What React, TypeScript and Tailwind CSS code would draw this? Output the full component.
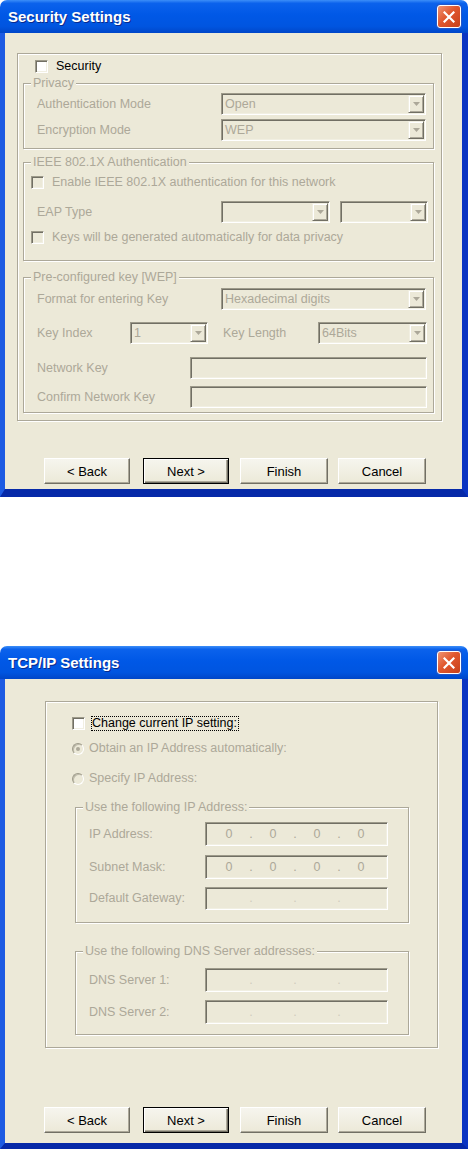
import React, { Fragment } from "react";

const SUNKEN =
  "border border-t-[#9D9A8A] border-l-[#9D9A8A] border-b-white border-r-white shadow-[inset_1px_1px_0_#716F64,inset_-1px_-1px_0_#F1EFE2]";
const GRAY = "text-[#ACA899]";

function CloseBtn() {
  return (
    <div className="w-[24px] h-[23px] rounded-[3px] border border-white bg-[linear-gradient(135deg,#EE9474_0%,#E0572E_45%,#C8401A_100%)] flex items-center justify-center shadow-[0_0_0_1px_#2457C8]">
      <svg width="12" height="12" viewBox="0 0 12 12">
        <path d="M1.5 1.5 L10.5 10.5 M10.5 1.5 L1.5 10.5" stroke="#fff" strokeWidth="2.2" strokeLinecap="square" />
      </svg>
    </div>
  );
}

function TitleBar({ title }: { title: string }) {
  return (
    <div className="h-[33px] flex items-center justify-between pl-[8px] pr-[7px] rounded-t-[7px] bg-[linear-gradient(to_bottom,#3C8EF8_0%,#0B62EC_10%,#0058E6_45%,#0055E0_80%,#0046C8_100%)]">
      <span className="text-white font-bold text-[15px] leading-none [text-shadow:1px_1px_0_#0A2A8C] font-['Liberation_Sans',Arial,sans-serif]">
        {title}
      </span>
      <CloseBtn />
    </div>
  );
}

function Frame({
  title,
  bottom,
  children,
}: {
  title: string;
  bottom: string;
  children: React.ReactNode;
}) {
  return (
    <div className="w-[468px] flex flex-col">
      <TitleBar title={title} />
      <div
        className={`border-l-[5px] border-l-[#1D5BE3] border-r-[6px] border-r-[#0A34C2] border-b-[#0629A8] bg-[#ECE9D8] ${bottom}`}
      >
        {children}
      </div>
    </div>
  );
}

function Group({
  label,
  className,
  children,
}: {
  label?: string;
  className: string;
  children: React.ReactNode;
}) {
  return (
    <div
      className={
        "relative flex flex-col border border-[#ACA899] shadow-[inset_1px_1px_0_#fff,1px_1px_0_#fff] " + className
      }
    >
      {label && (
        <span className="absolute -top-[8px] left-[7px] px-[2px] bg-[#ECE9D8] text-[#ACA899] leading-[14px] whitespace-nowrap">
          {label}
        </span>
      )}
      {children}
    </div>
  );
}

function Check({ white }: { white?: boolean }) {
  return (
    <span
      className={`block w-[13px] h-[13px] shrink-0 ${SUNKEN} ${white ? "bg-white" : "bg-[#ECE9D8]"}`}
    />
  );
}

function Radio({ checked }: { checked?: boolean }) {
  return (
    <span className="flex w-[12px] h-[12px] shrink-0 rounded-full border border-t-[#9D9A8A] border-l-[#9D9A8A] border-b-white border-r-white bg-[#ECE9D8] shadow-[inset_1px_1px_0_#BDBAAA] items-center justify-center">
      {checked && <span className="block w-[4px] h-[4px] rounded-full bg-[#ACA899]" />}
    </span>
  );
}

function Arrow() {
  return (
    <span className="flex w-[16px] h-full shrink-0 items-center justify-center bg-[#ECE9D8] border border-t-[#F1EFE2] border-l-[#F1EFE2] border-b-[#716F64] border-r-[#716F64] shadow-[inset_1px_1px_0_#fff,inset_-1px_-1px_0_#ACA899]">
      <svg width="7" height="4" viewBox="0 0 7 4">
        <path d="M0 0 H7 L3.5 4 Z" fill="#ACA899" />
      </svg>
    </span>
  );
}

function Combo({ text, className }: { text?: string; className: string }) {
  return (
    <div className={`h-[22px] flex p-[1px] bg-[#ECE9D8] ${SUNKEN} ${className}`}>
      <span className={`flex-1 flex items-center pl-[2px] ${GRAY} leading-none whitespace-nowrap overflow-hidden`}>
        {text}
      </span>
      <Arrow />
    </div>
  );
}

function Field({ className }: { className: string }) {
  return <div className={`h-[22px] bg-[#ECE9D8] ${SUNKEN} ${className}`} />;
}

function IpField({ zeros, className }: { zeros?: boolean; className: string }) {
  return (
    <div className={`w-[183px] flex items-center pl-[3px] bg-[#ECE9D8] ${SUNKEN} ${className}`}>
      {[0, 1, 2, 3].map((i) => (
        <Fragment key={i}>
          {i > 0 && (
            <span className={`w-[4px] text-center ${zeros ? "text-[#ACA899]" : "text-[#CFCCBD]"}`}>.</span>
          )}
          <span className="w-[40px] text-center text-[#ACA899]">{zeros ? "0" : ""}</span>
        </Fragment>
      ))}
    </div>
  );
}

function Btn({ children, def, className }: { children: React.ReactNode; def?: boolean; className: string }) {
  return (
    <div
      className={`h-[26px] flex items-center justify-center text-black text-[13px] bg-[linear-gradient(to_bottom,#F6F5EE,#ECE9D8)] ${
        def
          ? "border border-black shadow-[inset_1px_1px_0_#fff,inset_-1px_-1px_0_#716F64,inset_-2px_-2px_0_#ACA899]"
          : "border border-t-white border-l-white border-b-[#716F64] border-r-[#716F64] shadow-[inset_-1px_-1px_0_#ACA899]"
      } ${className}`}
    >
      {children}
    </div>
  );
}

function Buttons({ className }: { className: string }) {
  return (
    <div className={`flex ${className}`}>
      <Btn className="w-[86px] ml-[39px]">&lt; Back</Btn>
      <Btn def className="w-[86px] ml-[13px]">
        Next &gt;
      </Btn>
      <Btn className="w-[88px] ml-[11px]">Finish</Btn>
      <Btn className="w-[88px] ml-[10px]">Cancel</Btn>
    </div>
  );
}

function Lbl({ children, className }: { children: React.ReactNode; className: string }) {
  return <span className={`${GRAY} whitespace-nowrap shrink-0 ${className}`}>{children}</span>;
}

function SecurityWindow() {
  return (
    <Frame title="Security Settings" bottom="border-b-[8px]">
      <div className="h-[456px] flex flex-col">
        <Group className="ml-[12px] mt-[20px] w-[425px] h-[368px]">
          <div className="flex items-center h-[13px] mt-[6px] pl-[17px]">
            <Check white />
            <span className="ml-[8px] text-black">Security</span>
          </div>

          <Group label="Privacy" className="ml-[5px] mt-[10px] w-[411px] h-[66px]">
            <div className="flex items-center h-[22px] mt-[9px] pl-[13px]">
              <Lbl className="w-[184px]">Authentication Mode</Lbl>
              <Combo text="Open" className="w-[205px]" />
            </div>
            <div className="flex items-center h-[22px] mt-[4px] pl-[13px]">
              <Lbl className="w-[184px]">Encryption Mode</Lbl>
              <Combo text="WEP" className="w-[205px]" />
            </div>
          </Group>

          <Group label="IEEE 802.1X Authentication" className="ml-[5px] mt-[13px] w-[411px] h-[99px]">
            <div className="flex items-center h-[13px] mt-[13px] pl-[7px]">
              <Check />
              <Lbl className="ml-[8px]">Enable IEEE 802.1X authentication for this network</Lbl>
            </div>
            <div className="flex items-center h-[22px] mt-[12px] pl-[13px]">
              <Lbl className="w-[184px]">EAP Type</Lbl>
              <Combo className="w-[109px]" />
              <Combo className="w-[88px] ml-[10px]" />
            </div>
            <div className="flex items-center h-[13px] mt-[8px] pl-[7px]">
              <Check />
              <Lbl className="ml-[8px]">Keys will be generated automatically for data privacy</Lbl>
            </div>
          </Group>

          <Group label="Pre-configured key [WEP]" className="ml-[5px] mt-[16px] w-[411px] h-[136px]">
            <div className="flex items-center h-[22px] mt-[10px] pl-[13px]">
              <Lbl className="w-[184px]">Format for entering Key</Lbl>
              <Combo text="Hexadecimal digits" className="w-[205px]" />
            </div>
            <div className="flex items-center h-[22px] mt-[12px] pl-[13px]">
              <Lbl className="w-[93px]">Key Index</Lbl>
              <Combo text="1" className="w-[78px]" />
              <Lbl className="w-[95px] ml-[15px]">Key Length</Lbl>
              <Combo text="64Bits" className="w-[109px]" />
            </div>
            <div className="flex items-center h-[22px] mt-[13px] pl-[13px]">
              <Lbl className="w-[153px]">Network Key</Lbl>
              <Field className="w-[237px]" />
            </div>
            <div className="flex items-center h-[22px] mt-[7px] pl-[13px]">
              <Lbl className="w-[153px]">Confirm Network Key</Lbl>
              <Field className="w-[237px]" />
            </div>
          </Group>
        </Group>

        <Buttons className="mt-[37px]" />
      </div>
    </Frame>
  );
}

function TcpWindow() {
  return (
    <Frame title="TCP/IP Settings" bottom="border-b-[6px]">
      <div className="h-[464px] flex flex-col">
        <Group className="ml-[40px] mt-[22px] w-[393px] h-[347px]">
          <div className="flex items-center h-[15px] mt-[14px] pl-[26px]">
            <Check white />
            <span className="ml-[6px] text-black border border-dotted border-black leading-[13px] pr-[1px]">
              Change current IP setting:
            </span>
          </div>
          <div className="flex items-center h-[13px] mt-[11px] pl-[26px]">
            <Radio checked />
            <Lbl className="ml-[5px]">Obtain an IP Address automatically:</Lbl>
          </div>
          <div className="flex items-center h-[13px] mt-[17px] pl-[26px]">
            <Radio />
            <Lbl className="ml-[5px]">Specify IP Address:</Lbl>
          </div>

          <Group label="Use the following IP Address:" className="ml-[29px] mt-[22px] w-[334px] h-[116px]">
            <div className="flex items-center mt-[14px] pl-[13px]">
              <Lbl className="w-[116px]">IP Address:</Lbl>
              <IpField zeros className="h-[24px]" />
            </div>
            <div className="flex items-center mt-[9px] pl-[13px]">
              <Lbl className="w-[116px]">Subnet Mask:</Lbl>
              <IpField zeros className="h-[24px]" />
            </div>
            <div className="flex items-center mt-[8px] pl-[13px]">
              <Lbl className="w-[116px]">Default Gateway:</Lbl>
              <IpField className="h-[23px]" />
            </div>
          </Group>

          <Group label="Use the following DNS Server addresses:" className="ml-[29px] mt-[28px] w-[334px] h-[84px]">
            <div className="flex items-center mt-[16px] pl-[13px]">
              <Lbl className="w-[116px]">DNS Server 1:</Lbl>
              <IpField className="h-[24px]" />
            </div>
            <div className="flex items-center mt-[8px] pl-[13px]">
              <Lbl className="w-[116px]">DNS Server 2:</Lbl>
              <IpField className="h-[24px]" />
            </div>
          </Group>
        </Group>

        <Buttons className="mt-[59px]" />
      </div>
    </Frame>
  );
}

export default function App() {
  return (
    <div className="w-[468px] h-[1149px] bg-white flex flex-col text-[12.5px] leading-[15px] font-['Liberation_Sans',Arial,sans-serif]">
      <SecurityWindow />
      <div className="h-[149px] shrink-0" />
      <TcpWindow />
    </div>
  );
}
